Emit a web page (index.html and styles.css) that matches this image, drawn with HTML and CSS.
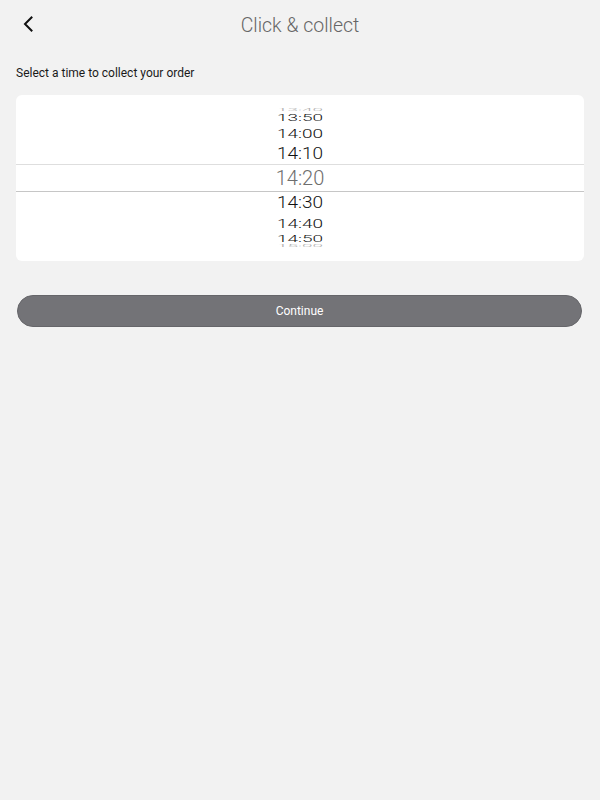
FILE: index.html
```html
<!DOCTYPE html>
<html lang="en">
<head>
    <meta charset="UTF-8">
    <meta name="viewport" content="width=device-width, initial-scale=1.0">
    <title>Click &amp; collect</title>
    <link rel="stylesheet" href="styles.css">
</head>
<body>
    <div class="header">
        <button class="back" type="button" aria-label="Back">
            <svg width="10" height="16" viewBox="0 0 10 16">
                <path d="M8.5 1.5 L2 8 L8.5 14.5" fill="none" stroke="#111" stroke-width="2" stroke-linecap="square"/>
            </svg>
        </button>
        <h1>Click &amp; collect</h1>
    </div>

    <p class="hint">Select a time to collect your order</p>

    <!-- Time picker wheel -->
    <div class="picker">
        <div class="row r4"><span>13:40</span></div>
        <div class="row r3"><span>13:50</span></div>
        <div class="row r2"><span>14:00</span></div>
        <div class="row r1"><span>14:10</span></div>
        <div class="row selected"><span>14:20</span></div>
        <div class="row r1"><span>14:30</span></div>
        <div class="row r2"><span>14:40</span></div>
        <div class="row r3"><span>14:50</span></div>
        <div class="row r4"><span>15:00</span></div>
    </div>

    <button class="continue" type="button">Continue</button>
</body>
</html>
```

FILE: styles.css
```css
body {
    margin: 0;
    background-color: #f2f2f2;
    font-family: Roboto, "Liberation Sans", sans-serif;
    color: #111;
}

.header {
    height: 50px;
    display: flex;
    align-items: center;
    justify-content: center;
    position: relative;
}

    .header h1 {
        margin: 0;
        font-size: 19.5px;
        font-weight: 300;
        color: #666666;
    }

.back {
    position: absolute;
    left: 19px;
    top: 16px;
    padding: 0;
    border: none;
    background: none;
    width: 18px;
    height: 16px;
    display: flex;
    align-items: center;
    justify-content: center;
}

.hint {
    margin: 16px 16px 0;
    font-size: 12px;
    line-height: 14px;
    color: #1a1a1a;
}

.picker {
    margin: 15px 16px 0;
    background-color: #ffffff;
    border-radius: 6px;
    padding: 13px 0;
    display: flex;
    flex-direction: column;
}

    .picker .row {
        display: flex;
        align-items: center;
        justify-content: center;
        overflow: hidden;
        font-size: 19px;
        font-weight: 300;
        color: #111;
    }

    .picker .row span {
        display: block;
        line-height: 19px;
    }

    .picker .selected {
        height: 28px;
        box-sizing: border-box;
        border-top: 1px solid #dedede;
        border-bottom: 1px solid #c6c6c6;
        color: #6e6e6e;
        font-size: 20px;
    }

    .picker .r1 { height: 21px; }
    .picker .r1 span { transform: scaleY(0.86); }

    .picker .r2 { height: 20px; }
    .picker .r2 span { transform: scaleY(0.68); }

    .picker .r3 { height: 11px; }
    .picker .r3 span { transform: scaleY(0.52); }

    .picker .r4 { height: 4px; color: #aaa; }
    .picker .r4 span { transform: scaleY(0.15); }

.continue {
    display: block;
    width: calc(100% - 35px);
    margin: 34px 0 0 17px;
    height: 32px;
    border: 1px solid #66666a;
    border-radius: 16px;
    background-color: #737377;
    color: #ffffff;
    font-family: Roboto, "Liberation Sans", sans-serif;
    font-size: 12px;
    cursor: pointer;
}
```
